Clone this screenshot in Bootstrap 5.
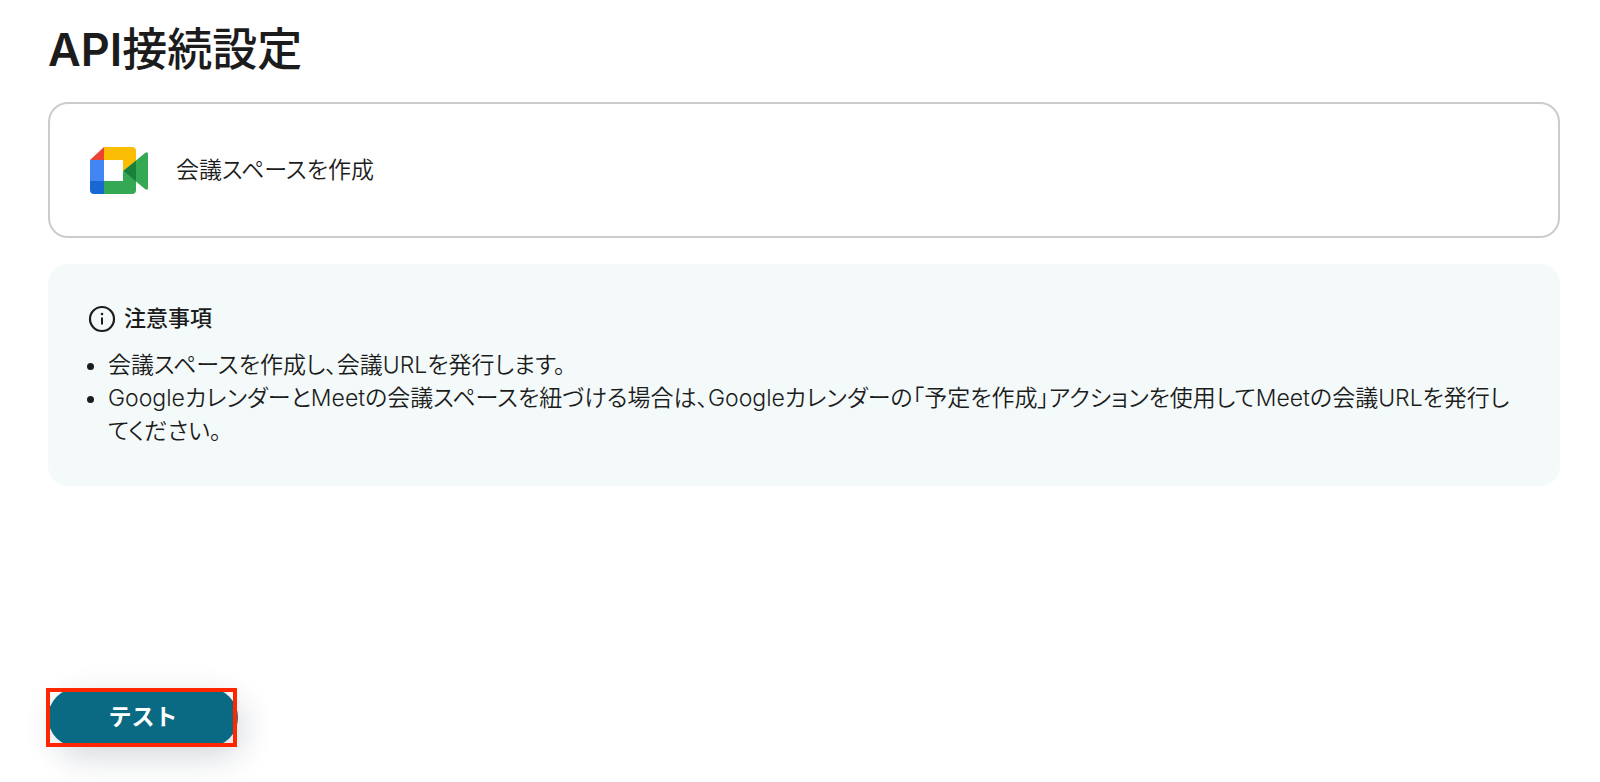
<!DOCTYPE html>
<html lang="ja">
<head>
<meta charset="utf-8">
<meta name="viewport" content="width=device-width, initial-scale=1">
<title>API接続設定</title>
<link href="https://cdn.jsdelivr.net/npm/bootstrap@5.3.0/dist/css/bootstrap.min.css" rel="stylesheet">
<style>
  body { font-family: Inter, "Noto Sans CJK JP", sans-serif; font-feature-settings: "palt"; font-size: 23px; line-height: 33px; font-weight: 350; color: #1c1c1c; background: #fff; }
  .page { padding: 17px 40px 34px 48px; }
  .page-title { font-size: 45px; line-height: 66px; font-weight: 500; margin-bottom: 19px; }
  .panel { border-radius: 20px; }
  .action-panel { border: 2px solid #ccc; padding: 36px 38px; column-gap: 24px; }
  .notes-panel { background: #f4fafa; padding: 38px 44px 38px 40px; margin-top: 26px; }
  .notes-title { font-size: 22px; line-height: 33px; font-weight: 500; }
  .notes-list { padding-left: 20px; margin-top: 14px; }
  .test-row { margin-top: 202px; }
  .marker-frame { border: 4px solid #ff2600; top: 0; left: -2px; right: 1px; bottom: 0; pointer-events: none; }
  .btn-test { width: 190px; padding: 13px 0; border-radius: 30px; background: #0a6a84; color: #fff; font-size: 23px; line-height: 33px; font-weight: 600; border: 0; box-shadow: 6px 10px 32px rgba(20, 40, 60, .18); }
  .btn-test:hover { background: #08586e; color: #fff; }
</style>
</head>
<body>
<main class="page">
  <h1 class="page-title"><span class="fw-semibold">API</span>接続設定</h1>

  <section class="panel action-panel d-flex align-items-center">
    <svg width="64" height="60" viewBox="0 0 64 60" aria-hidden="true">
      <path fill="#ea4335" d="M2 20 16 7v13z"/>
      <path fill="#fbbc04" d="M16 7h28q4 0 4 4v10L35 31V20H16z"/>
      <path fill="#4285f4" d="M2 20h14v21H2z"/>
      <path fill="#1967d2" d="M2 41h14v13H6q-4 0-4-4z"/>
      <path fill="#34a853" d="M16 41h19V31l13 10v9q0 4-4 4H16z"/>
      <path fill="#34a853" d="M48 20.500l9-7.500q3-2 3 1v34q0 3-3 1l-9-7.500z"/>
      <path fill="#188038" d="M35 31 48 20.500v21z"/>
    </svg>
    <span>会議スペースを作成</span>
  </section>

  <section class="panel notes-panel">
    <h2 class="notes-title d-flex align-items-center gap-2 mb-0">
      <svg width="28" height="28" viewBox="0 0 28 28" fill="none" stroke="#1c1c1c" aria-hidden="true">
        <circle cx="14" cy="14" r="12" stroke-width="2.200"/>
        <path d="M14 12.500v7" stroke-width="2"/>
        <circle cx="14" cy="9" r="1.300" fill="#1c1c1c" stroke="none"/>
      </svg>
      注意事項
    </h2>
    <ul class="notes-list mb-0">
      <li>会議スペースを作成し、会議URLを発行します。</li>
      <li>GoogleカレンダーとMeetの会議スペースを紐づける場合は、Googleカレンダーの「予定を作成」アクションを使用してMeetの会議URLを発行してください。</li>
    </ul>
  </section>

  <div class="test-row d-flex">
    <div class="position-relative">
      <button type="button" class="btn btn-test">テスト</button>
      <span class="marker-frame position-absolute"></span>
    </div>
  </div>
</main>
<script src="https://cdn.jsdelivr.net/npm/bootstrap@5.3.0/dist/js/bootstrap.bundle.min.js"></script>
</body>
</html>
